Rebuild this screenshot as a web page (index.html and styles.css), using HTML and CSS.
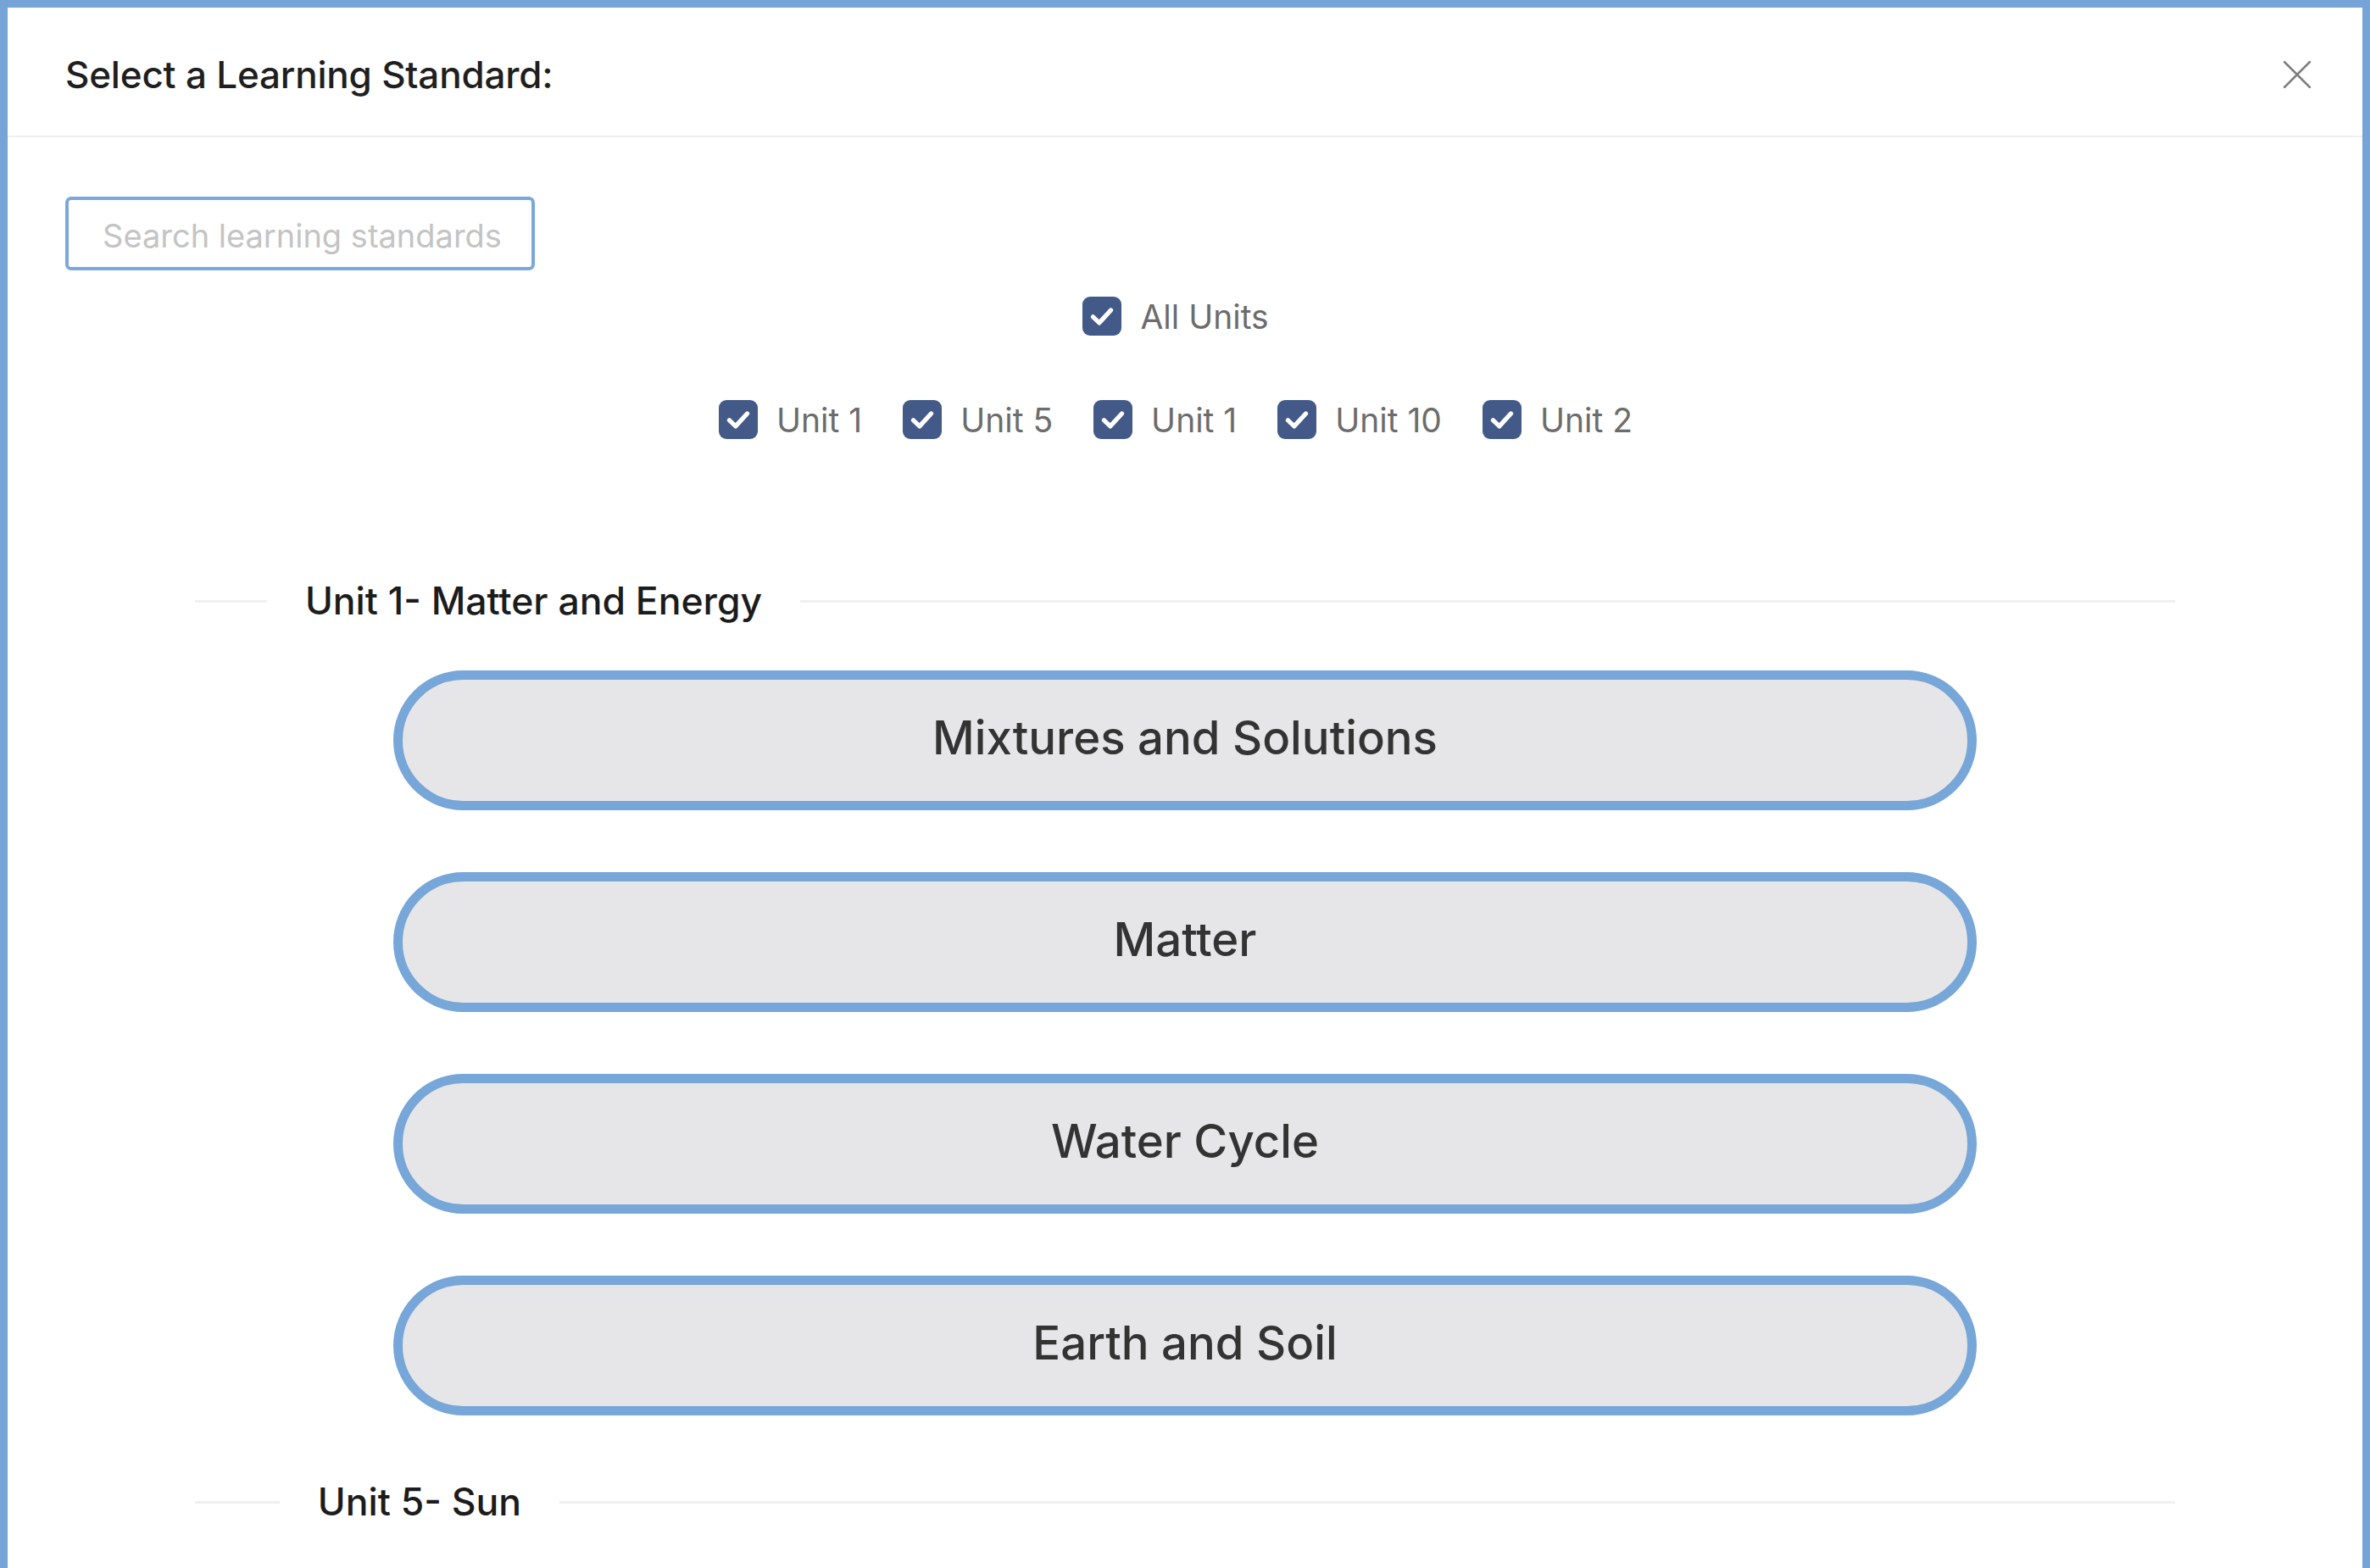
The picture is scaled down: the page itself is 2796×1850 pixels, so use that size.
FILE: index.html
```html
<!DOCTYPE html>
<html lang="en">
<head>
<meta charset="utf-8">
<title>Select a Learning Standard</title>
<link rel="stylesheet" href="styles.css">
</head>
<body>
<div class="modal">
  <header class="modal-header">
    <h1 class="modal-title">Select a Learning Standard:</h1>
    <button class="close" aria-label="Close">
      <svg viewBox="0 0 32 32" width="34" height="34"><path d="M2 2 L30 30 M30 2 L2 30" stroke="#7d7d7d" stroke-width="2.6" fill="none" stroke-linecap="round"/></svg>
    </button>
  </header>
  <main class="modal-body">
    <input class="search" type="text" placeholder="Search learning standards">
    <div class="filters">
      <div class="filter-row">
        <label class="check"><span class="box"><svg viewBox="0 0 24 24"><path d="M6 12.5 L10.2 16.5 L18 8" stroke="#fff" stroke-width="3" fill="none" stroke-linecap="round" stroke-linejoin="round"/></svg></span><span class="label">All Units</span></label>
      </div>
      <div class="filter-row units-row">
        <label class="check"><span class="box"><svg viewBox="0 0 24 24"><path d="M6 12.5 L10.2 16.5 L18 8" stroke="#fff" stroke-width="3" fill="none" stroke-linecap="round" stroke-linejoin="round"/></svg></span><span class="label">Unit 1</span></label>
        <label class="check"><span class="box"><svg viewBox="0 0 24 24"><path d="M6 12.5 L10.2 16.5 L18 8" stroke="#fff" stroke-width="3" fill="none" stroke-linecap="round" stroke-linejoin="round"/></svg></span><span class="label">Unit 5</span></label>
        <label class="check"><span class="box"><svg viewBox="0 0 24 24"><path d="M6 12.5 L10.2 16.5 L18 8" stroke="#fff" stroke-width="3" fill="none" stroke-linecap="round" stroke-linejoin="round"/></svg></span><span class="label">Unit 1</span></label>
        <label class="check"><span class="box"><svg viewBox="0 0 24 24"><path d="M6 12.5 L10.2 16.5 L18 8" stroke="#fff" stroke-width="3" fill="none" stroke-linecap="round" stroke-linejoin="round"/></svg></span><span class="label">Unit 10</span></label>
        <label class="check"><span class="box"><svg viewBox="0 0 24 24"><path d="M6 12.5 L10.2 16.5 L18 8" stroke="#fff" stroke-width="3" fill="none" stroke-linecap="round" stroke-linejoin="round"/></svg></span><span class="label">Unit 2</span></label>
      </div>
    </div>
    <section class="units">
      <div class="divider"><span class="divider-text">Unit 1- Matter and Energy</span></div>
      <div class="standards">
        <button class="standard">Mixtures and Solutions</button>
        <button class="standard">Matter</button>
        <button class="standard">Water Cycle</button>
        <button class="standard">Earth and Soil</button>
      </div>
      <div class="divider"><span class="divider-text">Unit 5- Sun</span></div>
    </section>
  </main>
</div>
</body>
</html>
```
FILE: styles.css
```css
* { box-sizing: border-box; }
html, body { margin: 0; padding: 0; background: #fff; }
body { font-family: Inter, "Noto Sans", sans-serif; overflow: hidden; }

.modal {
  height: 1850px;
  border: 9px solid #76a4d6;
  border-bottom: none;
  background: #fff;
  display: flex;
  flex-direction: column;
  overflow: hidden;
}

.modal-header {
  height: 153px;
  flex: none;
  display: flex;
  align-items: center;
  justify-content: space-between;
  padding: 6px 60px 0 68px;
  border-bottom: 2px solid #efefef;
}
.modal-title {
  margin: 0;
  font-size: 44px;
  font-weight: 500;
  color: #1f1f1f;
  letter-spacing: -0.2px;
}
.close {
  border: none;
  background: none;
  padding: 0;
  width: 34px;
  height: 34px;
  display: flex;
}

.modal-body {
  padding: 70px 68px 0 68px;
  flex: 1;
}

.search {
  display: block;
  width: 554px;
  height: 87px;
  border: 4px solid #7aa8da;
  border-radius: 7px;
  padding: 4px 0 0 40px;
  font-family: Inter, "Noto Sans", sans-serif;
  font-size: 38px;
  color: #333;
  outline: none;
}
.search::placeholder { color: #c4c4c4; }

.filters {
  padding-right: 22px;
  margin-top: 31px;
  display: flex;
  flex-direction: column;
  gap: 76px;
}
.filter-row {
  display: flex;
  justify-content: center;
  gap: 48px;
}
.check {
  display: flex;
  align-items: center;
  gap: 22px;
  height: 46px;
}
.box {
  width: 46px;
  height: 46px;
  border-radius: 9px;
  background: #435a88;
  display: flex;
  align-items: center;
  justify-content: center;
}
.box svg { width: 42px; height: 42px; }
.label {
  font-size: 39px;
  color: #6c6c6c;
}

.units {
  padding: 0 153px;
  margin-top: 161px;
}
.divider {
  display: flex;
  align-items: center;
  height: 60px;
  white-space: nowrap;
}
.divider::before, .divider::after {
  content: "";
  border-top: 3px solid #f0f0f0;
}
.divider::before { width: 5%; }
.divider::after { width: 95%; }
.divider-text {
  font-size: 44.5px;
  font-weight: 500;
  color: #1c1c1c;
  padding: 0 1em;
}

.standards {
  display: flex;
  flex-direction: column;
  align-items: center;
  gap: 73px;
  padding: 52px 0 72px;
}
.standard {
  width: 80%;
  height: 165px;
  border: 11px solid #77a6d8;
  border-radius: 83px;
  background: #e6e6e8;
  font-family: Inter, "Noto Sans", sans-serif;
  font-size: 54.5px;
  font-weight: 500;
  color: #333;
  padding: 0 0 8px;
}
```
